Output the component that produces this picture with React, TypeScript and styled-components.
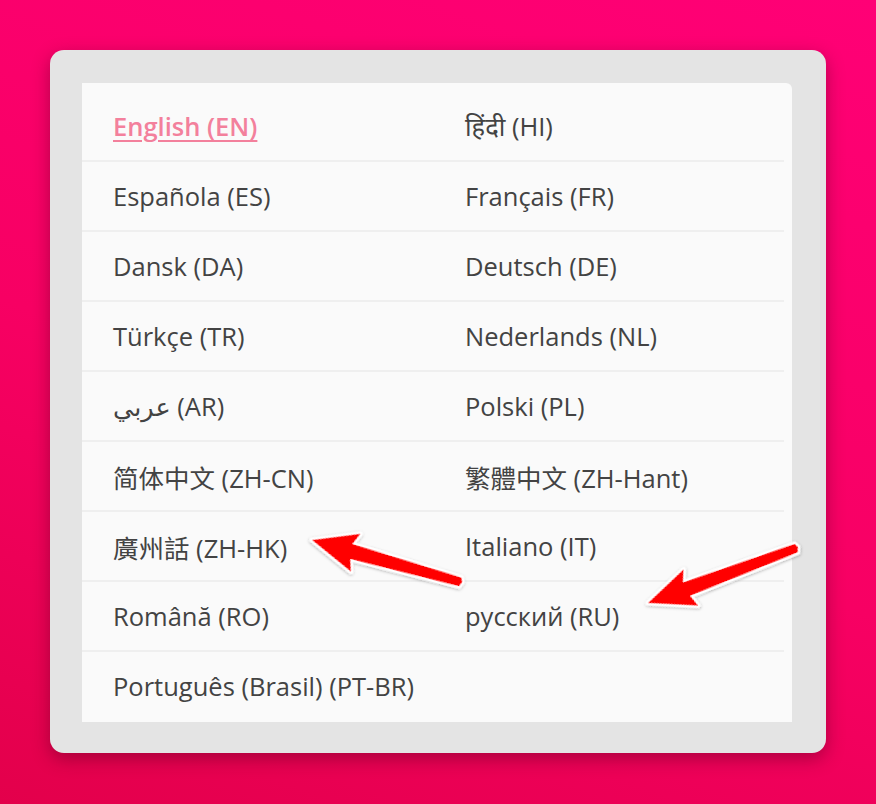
import React from "react";
import styled, { createGlobalStyle } from "styled-components";

const GlobalStyle = createGlobalStyle`
  html, body {
    margin: 0;
    padding: 0;
    height: 100%;
  }
  body {
    font-family: "Open Sans", "Noto Sans", "Noto Sans CJK TC", "DejaVu Sans", sans-serif;
  }
`;

const Page = styled.div`
  position: relative;
  width: 876px;
  height: 804px;
  box-sizing: border-box;
  padding: 50px 50px 0 50px;
  background: linear-gradient(200deg, #ff0076 0%, #f70063 55%, #e3004b 100%);
  overflow: hidden;
`;

const Card = styled.div`
  width: 776px;
  height: 703px;
  box-sizing: border-box;
  padding: 33px 34px 31px 32px;
  background: #e4e4e4;
  border-radius: 14px;
  box-shadow: 0 6px 18px rgba(90, 0, 30, 0.45);
`;

const Panel = styled.div`
  height: 100%;
  box-sizing: border-box;
  padding-top: 9px;
  background: #fafafa;
  border-radius: 0 6px 0 0;
  overflow: hidden;
`;

const Row = styled.div<{ $last?: boolean }>`
  display: grid;
  grid-template-columns: 352px 1fr;
  height: 68px;
  margin-right: 8px;
  border-bottom: 2px solid ${(p) => (p.$last ? "transparent" : "#efefef")};
`;

const Cell = styled.div`
  display: flex;
  align-items: center;
  padding-left: 31px;
  font-size: 25.5px;
  color: #434343;
  white-space: nowrap;
`;

const Current = styled.a`
  color: #f3809c;
  font-weight: 600;
  text-decoration: underline;
  text-decoration-thickness: 2px;
  text-underline-offset: 4px;
  cursor: pointer;
`;

const Overlay = styled.svg`
  position: absolute;
  left: 0;
  top: 0;
  pointer-events: none;
`;

const rows: [string, string][] = [
  ["English (EN)", "हिंदी (HI)"],
  ["Española (ES)", "Français (FR)"],
  ["Dansk (DA)", "Deutsch (DE)"],
  ["Türkçe (TR)", "Nederlands (NL)"],
  ["عربي (AR)", "Polski (PL)"],
  ["简体中文 (ZH-CN)", "繁體中文 (ZH-Hant)"],
  ["廣州話 (ZH-HK)", "Italiano (IT)"],
  ["Română (RO)", "русский (RU)"],
  ["Português (Brasil) (PT-BR)", ""],
];

function fontFor(text: string) {
  if (text.startsWith("简")) return { fontFamily: '"Open Sans", "Noto Sans CJK SC", sans-serif' };
  if (text.startsWith("繁") || text.startsWith("廣")) return { fontFamily: '"Open Sans", "Noto Sans CJK TC", sans-serif' };
  return undefined;
}

function Arrow({ x, y, angle, length }: { x: number; y: number; angle: number; length: number }) {
  const L = length;
  const pts = `0,0 45,-19 40,-7 ${L},-4 ${L + 2},0 ${L},5 42,8 46,20`;
  return (
    <g transform={`translate(${x} ${y}) rotate(${angle})`}>
      <polygon
        points={pts}
        fill="#ff0000"
        stroke="#ffffff"
        strokeWidth={5}
        strokeLinejoin="round"
        paintOrder="stroke"
        filter="url(#arrowShadow)"
      />
    </g>
  );
}

export default function App() {
  return (
    <>
      <GlobalStyle />
      <Page>
        <Card>
          <Panel>
            {rows.map(([left, right], i) => (
              <Row key={left} $last={i === rows.length - 1}>
                <Cell style={fontFor(left)}>{i === 0 ? <Current>{left}</Current> : left}</Cell>
                <Cell style={fontFor(right)}>{right}</Cell>
              </Row>
            ))}
          </Panel>
        </Card>
        <Overlay width="876" height="804" viewBox="0 0 876 804">
          <defs>
            <filter id="arrowShadow" x="-20%" y="-50%" width="140%" height="200%">
              <feDropShadow dx="0" dy="1" stdDeviation="1.5" floodColor="#000" floodOpacity="0.3" />
            </filter>
          </defs>
          <Arrow x={312} y={540} angle={15.6} length={154} />
          <Arrow x={648} y={603} angle={-20.5} length={158} />
        </Overlay>
      </Page>
    </>
  );
}
